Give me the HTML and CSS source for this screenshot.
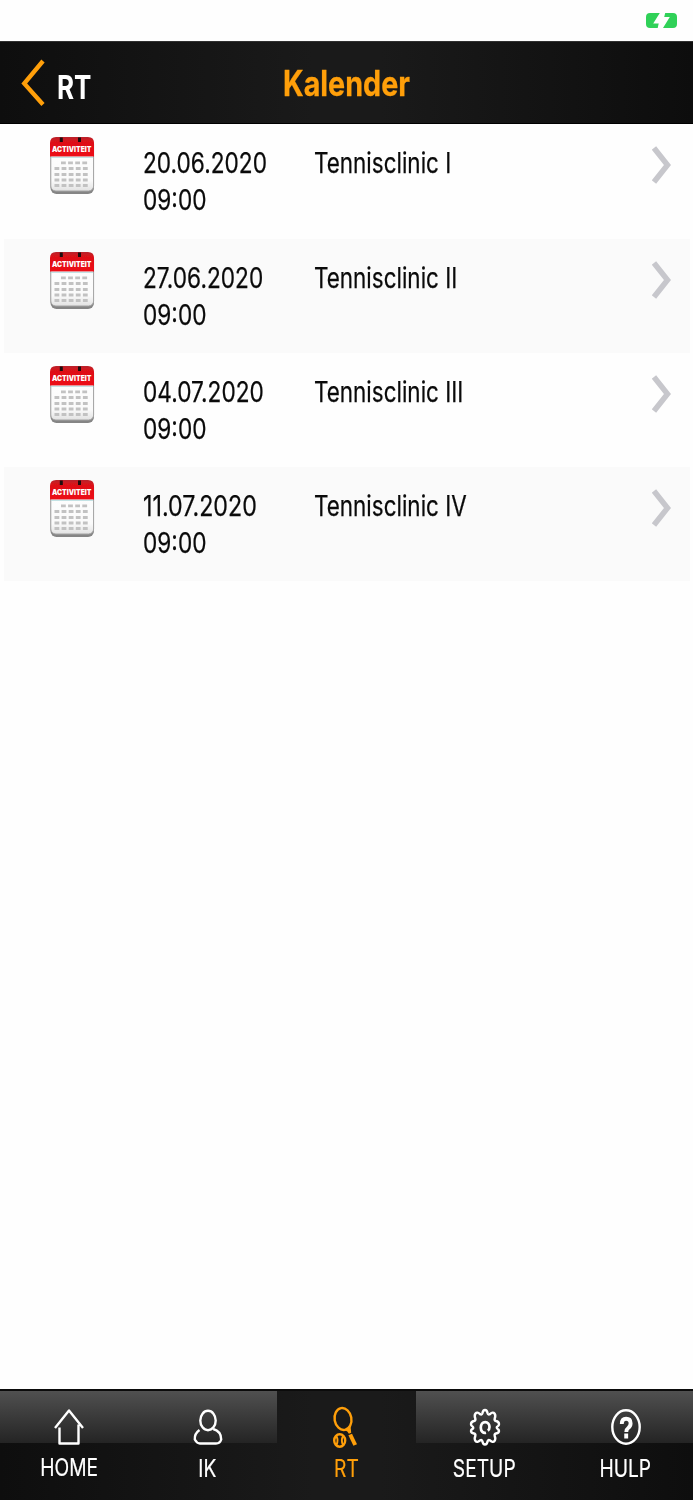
FILE: index.html
```
<!DOCTYPE html>
<html lang="nl">
<head>
<meta charset="utf-8">
<title>Kalender</title>
<link rel="stylesheet" href="styles.css">
</head>
<body>
<svg width="0" height="0" class="defs">
  <defs>
    <linearGradient id="red" x1="0" y1="0" x2="0" y2="1"><stop offset="0" stop-color="#b8242b"/><stop offset=".25" stop-color="#dd1018"/><stop offset="1" stop-color="#ee0a14"/></linearGradient>
    <linearGradient id="paper" x1="0" y1="0" x2="0" y2="1"><stop offset="0" stop-color="#fff"/><stop offset=".8" stop-color="#fafafa"/><stop offset="1" stop-color="#e2e2e2"/></linearGradient>
    <filter id="soft" x="-10%" y="-10%" width="120%" height="120%"><feGaussianBlur stdDeviation=".6"/></filter>
    <symbol id="calendar" viewBox="0 0 48 62">
      <g filter="url(#soft)">
        <rect x="2.5" y="5" width="43.5" height="54" rx="6" fill="#858585"/>
        <rect x="2.8" y="4" width="42.8" height="52" rx="5" fill="url(#paper)" stroke="#a5a5a5" stroke-width="1"/>
        <path d="M2 21.500V8q0-6 6-6h32q6 0 6 6v13.500z" fill="url(#red)"/>
        <path d="M3 22.300h42" stroke="#b4dcdf" stroke-width="1"/>
        <path d="M13.300 2.500v4.500M31.500 2.500v4.500" stroke="#1b1010" stroke-width="3"/>
        <path d="M13 27.800h27M6.500 33.500h33.500M6.500 39.500h33.500M6.500 45h33.500M6.500 50.500h33.500" stroke="#c2c2c2" stroke-width="2.800" stroke-dasharray="4.800 2.300"/>
      </g>
      <text x="4" y="16.800" textLength="39.500" lengthAdjust="spacingAndGlyphs" class="cal-text">ACTIVITEIT</text>
    </symbol>
  </defs>
</svg>

<div class="status">
  <svg width="31" height="15" viewBox="0 0 31 15" fill="#30d158"><path d="M4 0h9.800L7.200 10.500h5.500L11.700 15H4q-4 0-4-4V4q0-4 4-4z"/><path d="M19.200 0H27q4 0 4 4v7q0 4-4 4H17l6.800-11h-5.600z"/></svg>
</div>

<header class="navbar">
  <a class="back">
    <svg width="24" height="48" viewBox="0 0 24 48"><path d="M22 2L3.200 24.500l18.800 21" fill="none" stroke="#ff9f0a" stroke-width="4.300"/></svg>
    <span class="back-label">RT</span>
  </a>
  <h1 class="title">Kalender</h1>
</header>

<main class="list">
  <article class="row">
    <svg class="cal"><use href="#calendar"/></svg>
    <div class="when"><span class="date">20.06.2020</span><span>09:00</span></div>
    <div class="name">Tennisclinic I</div>
    <svg class="chevron" viewBox="0 0 19 38"><path d="M2 2l13.500 17L2 36"/></svg>
  </article>
  <article class="row alt">
    <svg class="cal"><use href="#calendar"/></svg>
    <div class="when"><span class="date">27.06.2020</span><span>09:00</span></div>
    <div class="name">Tennisclinic II</div>
    <svg class="chevron" viewBox="0 0 19 38"><path d="M2 2l13.500 17L2 36"/></svg>
  </article>
  <article class="row">
    <svg class="cal"><use href="#calendar"/></svg>
    <div class="when"><span class="date">04.07.2020</span><span>09:00</span></div>
    <div class="name">Tennisclinic III</div>
    <svg class="chevron" viewBox="0 0 19 38"><path d="M2 2l13.500 17L2 36"/></svg>
  </article>
  <article class="row alt">
    <svg class="cal"><use href="#calendar"/></svg>
    <div class="when"><span class="date last">11.07.2020</span><span>09:00</span></div>
    <div class="name">Tennisclinic IV</div>
    <svg class="chevron" viewBox="0 0 19 38"><path d="M2 2l13.500 17L2 36"/></svg>
  </article>
</main>

<nav class="tabs">
  <a class="tab home">
    <svg class="icon" viewBox="0 0 32 40"><path d="M2 21L16 3.500l14 17.500M6.500 20.500v16h19V17.500"/></svg>
    <span>HOME</span>
  </a>
  <a class="tab">
    <svg class="icon" viewBox="0 0 32 40"><ellipse cx="16" cy="13.500" rx="7.700" ry="9.700"/><path d="M7.500 23C4 25.500 2.500 29 2.800 32.500q2.200 4 5.200 4h16q4 0 5.200-4c0-5-2.700-9-8-10.500"/></svg>
    <span>IK</span>
  </a>
  <a class="tab active">
    <svg class="icon racket" viewBox="0 0 32 44"><ellipse cx="14" cy="14" rx="8.400" ry="11" transform="rotate(-10 14 14)"/><path d="M15.500 25q3.500-1 6-4.500l.7 7.300-2.300 1q-1-2.500-4.400-3.800z" fill="currentColor" stroke="none"/><path d="M21.200 29.500l5 10.500" stroke-width="4"/><ellipse cx="10.700" cy="35.500" rx="5.500" ry="6.200"/><path d="M7.300 31q2.500 4.500 0 9M14.100 31q-2.500 4.500 0 9" stroke-width="2"/></svg>
    <span>RT</span>
  </a>
  <a class="tab setup">
    <svg class="icon" viewBox="0 0 32 40"><path d="M13.400 6.300Q14 3 16 3t2.600 3.300q.5 1.800 2.400.8Q24 4.500 25.500 6.500t.2 5q-.5 2 1.300 2.500Q30 14.500 30 17.200q0 1.600-1.500 2.300t0 2.300Q30 22.500 30 24q0 2-3 2.500-1.800.5-1.300 2.500 1.300 3-.2 5t-4.500-.6q-1.900-1-2.400.8Q18 37.500 16 37.500t-2.600-3.300q-.5-1.800-2.400-.8Q8 36 6.500 34t-.2-5q.5-2-1.300-2.500Q2 26 2 24q0-1.500 1.500-2.200t0-2.300Q2 18.800 2 17.200 2 14.500 5 14q1.800-.5 1.300-2.500-1.300-3 .2-5t4.500.6q1.900 1 2.400-.8z"/><path d="M17 25.700c-3 .7-5.200-1.700-5.200-5s1.800-5.600 4.400-5.600 4.300 2.300 4.300 5q0 2.500-1.700 3.600" stroke-width="2.700"/></svg>
    <span>SETUP</span>
  </a>
  <a class="tab help">
    <svg class="icon" viewBox="0 0 32 40"><ellipse cx="16" cy="20" rx="13.700" ry="16.700"/><path d="M11.800 17q0-5.300 4.300-5.300 4.500 0 4.500 4.500 0 3-2.400 4.800-1.900 1.300-1.900 4" stroke-width="3.900"/><path d="M16.200 26.500v5" stroke-width="3.900"/></svg>
    <span>HULP</span>
  </a>
</nav>
</body>
</html>
```
FILE: styles.css
```
* { box-sizing: border-box; }
body {
  margin: 0;
  height: 1500px;
  display: flex;
  flex-direction: column;
  background: #fefefe;
  font-family: Inter, Roboto, sans-serif;
  color: #0a0a0a;
  overflow: hidden;
}
svg { display: block; flex: none; }
.defs { position: absolute; }
.cal-text { font: 900 7.500px Inter, sans-serif; fill: #fff; }

.status {
  height: 41px;
  flex: none;
  display: flex;
  justify-content: flex-end;
  padding: 13px 16px 0 0;
}

.navbar {
  height: 83px;
  flex: none;
  display: grid;
  grid-template-columns: 200px 1fr 200px;
  background: linear-gradient(90deg, #0e0e0e, #1a1a1a 45%, #1a1a1a 55%, #0d0d0d);
  border-top: 1px solid #303030;
  border-bottom: 1px solid #000;
}
.back { display: flex; padding: 17px 0 0 21px; }
.back-label {
  margin-left: 12px;
  margin-top: 9px;
  font-size: 32.500px;
  line-height: 40px;
  height: 40px;
  font-weight: 700;
  color: #fff;
  transform: scaleX(.8);
  transform-origin: left;
}
.title {
  margin: 0;
  padding-top: 19px;
  text-align: center;
  font-size: 35px;
  line-height: 44px;
  font-weight: 650;
  -webkit-text-stroke: .3px;
  color: #ff9f0a;
  transform: scaleX(.82);
}

.list { flex: 1; }
.row {
  height: 114px;
  margin: 0 3px 0 4px;
  padding-left: 44px;
  display: grid;
  grid-template-columns: 95px 171px 1fr 38px;
  font-size: 28px;
  line-height: 37px;
  -webkit-text-stroke: .25px;
}
.row:first-child { height: 114.500px; }
.alt { background: #fafafa; }
.cal { width: 48px; height: 62px; margin-top: 11px; }
.when { display: flex; flex-direction: column; padding-top: 21px; }
.when span, .name {
  white-space: nowrap;
  transform: scaleX(.81);
  transform-origin: left;
}
.when .last { transform: scaleX(.83); }
.name { padding-top: 21px; transform: scaleX(.802); }
.chevron { width: 19px; height: 38px; margin-top: 22px; }
.chevron path { fill: none; stroke: #c7c7cc; stroke-width: 5.500; }

.tabs {
  height: 111px;
  flex: none;
  display: grid;
  grid-template-columns: 139px 138px 139px 138px 139px;
  background: linear-gradient(90deg, #0e0e0e, #1a1a1a 45%, #1a1a1a 55%, #0e0e0e);
  border-top: 2px solid #0b0b0b;
}
.tab {
  display: flex;
  flex-direction: column;
  align-items: center;
  padding: 16px 1px 0 0;
  font-size: 24px;
  line-height: 30px;
  color: #fff;
  background: linear-gradient(#505050, #242424) top / 100% 52px no-repeat;
}
.tab span { margin-top: 7px; transform: scaleX(.8); -webkit-text-stroke: .2px; }
.home span { margin-top: 6px; }
.help { padding: 16px 0 0 4px; }
.active { color: #ff9f0a; background: none; }
.icon { width: 32px; height: 40px; fill: none; stroke: currentColor; stroke-width: 2.400; stroke-linejoin: round; }
.racket { height: 44px; margin: -2px 2px -2px 0; }
```
